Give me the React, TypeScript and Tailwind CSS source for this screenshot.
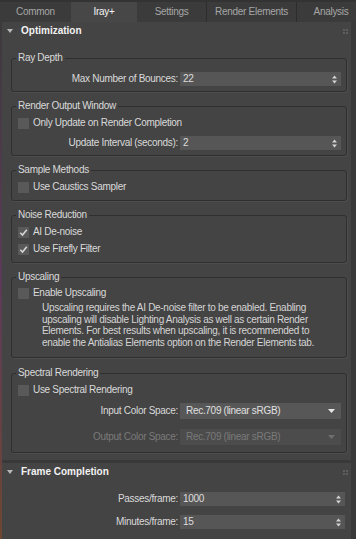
import type { ReactNode } from 'react';

const tabs = [
  { label: 'Common', w: 'w-[71px]' },
  { label: 'Iray+', w: 'w-[66px]', active: true },
  { label: 'Settings', w: 'w-[70px]' },
  { label: 'Render Elements', w: 'w-[90px]' },
  { label: 'Analysis', w: 'w-[68px]' },
];

const SpinArrows = () => (
  <svg width="5" height="9" viewBox="0 0 5 9" className="shrink-0">
    <polygon points="0,3.5 2.5,0.5 5,3.5" fill="#d4d4d4" />
    <polygon points="0,5.5 2.5,8.5 5,5.5" fill="#d4d4d4" />
  </svg>
);

const Spinner = ({ value, w = 'w-[161px]', mr = 'mr-[5px]' }: { value: string; w?: string; mr?: string }) => (
  <div className={`${w} ${mr} h-[14px] bg-[#565656] flex items-center pl-[3px] pr-[4px] text-[#dedede]`}>
    <span className="flex-1">{value}</span>
    <SpinArrows />
  </div>
);

const Dropdown = ({ value, disabled }: { value: string; disabled?: boolean }) => (
  <div
    className={`w-[161px] mr-[5px] h-[16px] flex items-center pl-[6px] pr-[6px] ${
      disabled ? 'bg-[#4c4c4c] text-[#7a7a7a]' : 'bg-[#575757] text-[#e0e0e0]'
    }`}
  >
    <span className="flex-1">{value}</span>
    <svg width="7" height="4" viewBox="0 0 7 4">
      <polygon points="0,0 7,0 3.5,4" fill={disabled ? '#6e6e6e' : '#e6e6e6'} />
    </svg>
  </div>
);

const Checkbox = ({ label, checked }: { label: string; checked?: boolean }) => (
  <div className="h-[14px] flex items-center pl-[6px] gap-[4px]">
    <div className="w-[11px] h-[11px] bg-[#595959] flex items-center justify-center">
      {checked && (
        <svg width="9" height="9" viewBox="0 0 9 9">
          <path d="M1.3 4.8 L3.5 7 L7.8 1.8" stroke="#d6d6d6" strokeWidth="1.6" fill="none" />
        </svg>
      )}
    </div>
    <span className="text-[#dadada]">{label}</span>
  </div>
);

const Row = ({ label, children, disabled }: { label: string; children: ReactNode; disabled?: boolean }) => (
  <div className="flex items-center">
    <span className={`flex-1 text-right pr-[2px] ${disabled ? 'text-[#7a7a7a]' : 'text-[#dadada]'}`}>{label}</span>
    {children}
  </div>
);

const Group = ({ title, className = '', children }: { title: string; className?: string; children: ReactNode }) => (
  <fieldset
    className={`ml-[9px] mr-[4px] border border-[#2f2f2f] rounded-[3px] shadow-[1px_1px_0_#4d4d4d] ${className}`}
  >
    <legend className="ml-[4px] px-[2px] leading-[12px] text-[#dadada]">{title}</legend>
    {children}
  </fieldset>
);

const RolloutHeader = ({ title }: { title: string }) => (
  <div className="h-[18px] flex items-center pl-[5px] pr-[3px]">
    <svg width="6" height="4" viewBox="0 0 6 4" className="mr-[8px]">
      <polygon points="0,0 6,0 3,4" fill="#b8b8b8" />
    </svg>
    <span className="flex-1 font-bold text-[10px] tracking-normal text-[#f2f2f2]">{title}</span>
    <svg width="5" height="5" viewBox="0 0 5 5">
      <rect x="0" y="0" width="2" height="2" fill="#5e5e5e" />
      <rect x="3" y="0" width="2" height="2" fill="#5e5e5e" />
      <rect x="0" y="3" width="2" height="2" fill="#5e5e5e" />
      <rect x="3" y="3" width="2" height="2" fill="#5e5e5e" />
    </svg>
  </div>
);

export default function App() {
  return (
    <div className="w-[356px] h-[539px] overflow-hidden bg-[#393939] flex flex-col font-['Liberation_Sans',Arial,sans-serif] text-[10px] tracking-[-0.3px] leading-[12px]">
      {/* tab bar */}
      <div className="h-[22px] flex shrink-0 bg-[#333333] pt-[2px]">
        {tabs.map((t, i) => (
          <div
            key={t.label}
            className={`${t.w} shrink-0 flex items-center justify-center ${
              t.active ? 'bg-[#474747] text-[#f4f4f4]' : 'bg-[#3b3b3b] text-[#a6a6a6]'
            } ${i >= 2 && i < tabs.length - 1 ? 'border-r border-[#2d2d2d]' : ''}`}
          >
            {t.label}
          </div>
        ))}
      </div>

      <div className="flex flex-1 min-h-0">
        <div className="w-[2px] shrink-0 bg-gradient-to-b from-[#3c3a3c] via-[#5c3a58] to-[#6e4630]" />
        <div className="w-[349px] shrink-0 flex flex-col">
          {/* Optimization rollout */}
          <div className="bg-[#444444] pb-[7px]">
            <RolloutHeader title="Optimization" />

            <Group title="Ray Depth" className="mt-[12px] pt-[8px] pb-[5px]">
              <Row label="Max Number of Bounces:">
                <Spinner value="22" />
              </Row>
            </Group>

            <Group title="Render Output Window" className="mt-[8px] pt-[4px] pb-[5px]">
              <Checkbox label="Only Update on Render Completion" />
              <div className="mt-[6px]">
                <Row label="Update Interval (seconds):">
                  <Spinner value="2" />
                </Row>
              </div>
            </Group>

            <Group title="Sample Methods" className="mt-[8px] pt-[4px] pb-[6px]">
              <Checkbox label="Use Caustics Sampler" />
            </Group>

            <Group title="Noise Reduction" className="mt-[8px] pt-[4px] pb-[6px]">
              <Checkbox label="AI De-noise" checked />
              <div className="mt-[3px]">
                <Checkbox label="Use Firefly Filter" checked />
              </div>
            </Group>

            <Group title="Upscaling" className="mt-[8px] pt-[3px] pb-[9px]">
              <Checkbox label="Enable Upscaling" />
              <p className="mt-[2px] pl-[30px] leading-[11.5px] text-[#d4d4d4]">
                Upscaling requires the AI De-noise filter to be enabled. Enabling
                <br />
                upscaling will disable Lighting Analysis as well as certain Render
                <br />
                Elements. For best results when upscaling, it is recommended to
                <br />
                enable the Antialias Elements option on the Render Elements tab.
              </p>
            </Group>

            <Group title="Spectral Rendering" className="mt-[9px] pt-[4px] pb-[7px]">
              <Checkbox label="Use Spectral Rendering" />
              <div className="mt-[6px]">
                <Row label="Input Color Space:">
                  <Dropdown value="Rec.709 (linear sRGB)" />
                </Row>
              </div>
              <div className="mt-[10px]">
                <Row label="Output Color Space:" disabled>
                  <Dropdown value="Rec.709 (linear sRGB)" disabled />
                </Row>
              </div>
            </Group>
          </div>

          {/* Frame Completion rollout */}
          <div className="mt-[3px] flex-1 bg-[#444444]">
            <RolloutHeader title="Frame Completion" />
            <div className="mt-[11px] pr-[6px]">
              <Row label="Passes/frame:">
                <Spinner value="1000" w="w-[165px]" mr="mr-0" />
              </Row>
              <div className="mt-[9px]">
                <Row label="Minutes/frame:">
                  <Spinner value="15" w="w-[165px]" mr="mr-0" />
                </Row>
              </div>
            </div>
          </div>
        </div>
      </div>
    </div>
  );
}
